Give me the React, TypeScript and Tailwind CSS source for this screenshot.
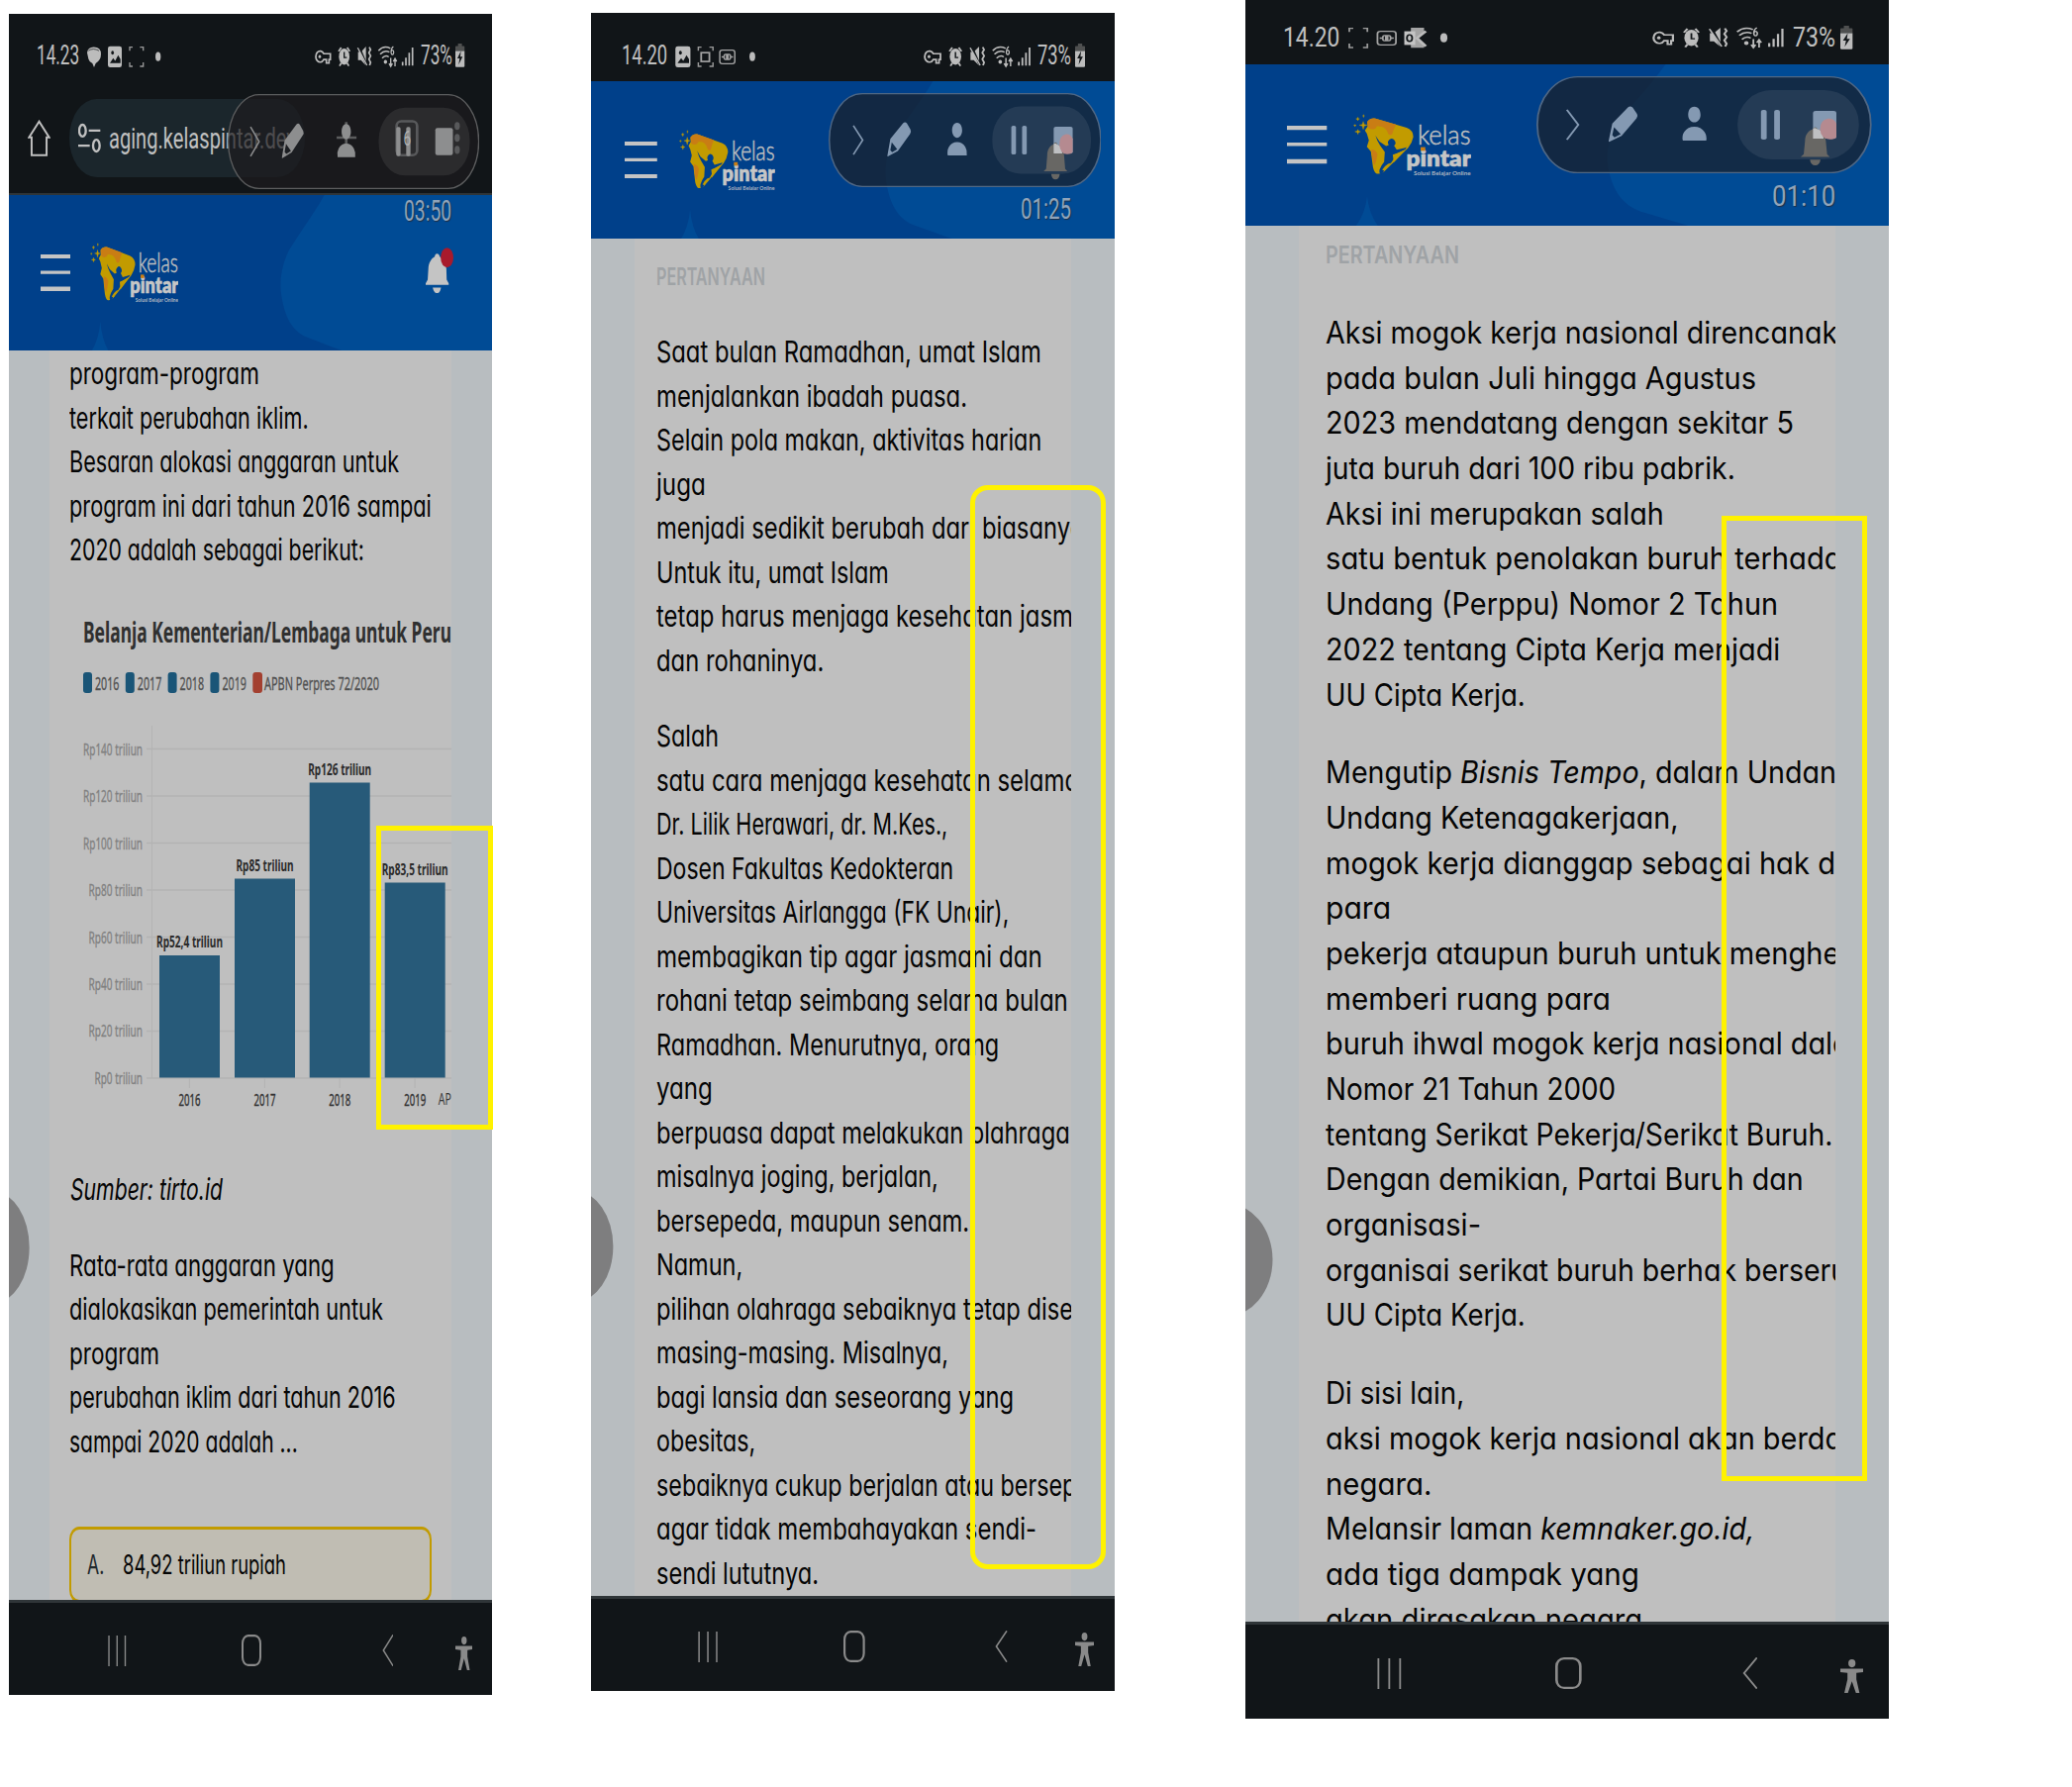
import React, { useLayoutEffect, useRef, useState } from "react";

/* Text squeezed or stretched horizontally to a given width. */
function Fit({ w, children, className = "" }: { w: number; children: React.ReactNode; className?: string }) {
  const ref = useRef<HTMLSpanElement>(null);
  const [scale, setScale] = useState(1);
  useLayoutEffect(() => {
    if (ref.current) setScale(w / ref.current.offsetWidth);
  }, [w]);
  return (
    <div className={"whitespace-nowrap " + className} style={{ width: w }}>
      <span ref={ref} className="inline-block origin-left" style={{ transform: `scaleX(${scale})` }}>
        {children}
      </span>
    </div>
  );
}

type LineData = [React.ReactNode, number];

function Para({ lines, line }: { lines: LineData[]; line: string }) {
  return (
    <div>
      {lines.map(([t, w], i) => (
        <Fit key={i} w={w + 2} className={line}>
          {t}
        </Fit>
      ))}
    </div>
  );
}

function StatusIcons() {
  return (
    <svg viewBox="954 130 300 76" preserveAspectRatio="none" className="h-[25px] w-[20.5%] shrink-0 text-[#bcbcbc]" fill="none" stroke="currentColor">
      <path d="M981 161a13 17 0 1 0 0 18h8v11h8v-11h4v-18z" strokeWidth="5" />
      <ellipse cx="969" cy="170" rx="4" ry="5" fill="currentColor" stroke="none" />
      <ellipse cx="1043" cy="170" rx="16" ry="25" fill="currentColor" stroke="none" />
      <path d="M1026 154l8-12M1060 154l-8-12M1029 199l5-9M1057 199l-5-9" strokeWidth="5" />
      <path d="M1043 156v17h8" stroke="#111518" strokeWidth="4" />
      <path d="M1085 156h9l15-17v59l-15-17h-9z" fill="currentColor" stroke="none" />
      <path d="M1088 139l24 60" stroke="#111518" strokeWidth="6" />
      <path d="M1084 143l28 54" strokeWidth="4" />
      <path d="M1119 141l4 8-5 9 5 10-5 10 5 10-3 9" strokeWidth="5" />
      <path d="M1147 152q16-18 36-7M1152 163q13-15 28-7M1158 175q10-12 20-4" strokeWidth="4.5" />
      <ellipse cx="1168" cy="186" rx="5" ry="6" fill="currentColor" stroke="none" />
      <path d="M1192 139q-7 5-7 17M1189 150a4 7 0 1 0 .1 0" strokeWidth="3.5" />
      <path d="M1184 174v26M1179 191l5 9 5-9M1197 200v-24M1192 185l5-9 5 9" strokeWidth="4" />
      <path d="M1220 186v12M1230 173v25M1240 158v40M1250 142v56" strokeWidth="5" />
    </svg>
  );
}

function Battery() {
  return (
    <svg viewBox="0 0 28 70" preserveAspectRatio="none" className="ml-[0.8%] mr-[5.6%] h-[24px] w-[1.9%] shrink-0">
      <path d="M8 0h12v7h6q2 0 2 3v12H0V10q0-3 2-3h6z" fill="#4f5050" />
      <path d="M0 22h28v44q0 3-3 3H3q-3 0-3-3z" fill="#bcbcbc" />
      <path d="M17 22L6 44h7l-3 18 12-23h-7z" fill="#111518" />
    </svg>
  );
}

const Picture = () => (
  <>
    <rect x="327" y="138" width="42" height="65" rx="7" fill="#bcbcbc" />
    <ellipse cx="341" cy="158" rx="4" ry="6" fill="#111518" />
    <path d="M333 190l10-15 6 8 9-17 7 12v12z" fill="#111518" />
  </>
);

const Corners = ({ x }: { x: number }) => (
  <path
    transform={`translate(${x} 0)`}
    d="M0 152v-11h9M31 141h10v11M41 188v12H31M9 200H0v-12"
    fill="none"
    stroke="#9a9a9a"
    strokeWidth="4"
  />
);

const Plug = ({ x }: { x: number }) => (
  <g transform={`translate(${x} 0)`} fill="none" stroke="#a4a4a4" strokeWidth="4">
    <rect x="2" y="150" width="42" height="42" rx="7" />
    <path d="M7 171h6M33 171h6M21 163h-3q-4 0-4 8t4 8h3zM25 163h3q4 0 4 8t-4 8h-3z" />
  </g>
);

function LeftIcons({ kind }: { kind: 1 | 2 | 3 }) {
  return (
    <svg viewBox="255 130 240 76" preserveAspectRatio="none" className="ml-[1%] h-[25px] w-[16.4%] shrink-0">
      {kind === 1 && (
        <>
          <path d="M264 158q2-16 20-17 22 0 22 22 0 18-16 28l-5 12-5-12q-9-3-12-14z" fill="#bcbcbc" />
          <path d="M268 152q14-10 32 0" stroke="#111518" strokeWidth="2" fill="none" />
          <Picture />
          <Corners x={393} />
        </>
      )}
      {kind === 2 && (
        <>
          <g transform="translate(-63 0)">
            <Picture />
          </g>
          <Corners x={328} />
          <rect x="336" y="158" width="23" height="27" fill="none" stroke="#a4a4a4" strokeWidth="5" />
          <Plug x={386} />
        </>
      )}
      {kind === 3 && (
        <>
          <Corners x={264} />
          <Plug x={326} />
          <path d="M404 139h30v12l-17 20 17 19v11h-30z" fill="#a4a4a4" />
          <rect x="389" y="150" width="25" height="42" fill="#c4c4c4" />
          <ellipse cx="401" cy="171" rx="6" ry="10" fill="none" stroke="#111518" strokeWidth="4" />
          <path d="M438 150l-20 21 20 25" stroke="#bcbcbc" strokeWidth="7" fill="none" />
        </>
      )}
      <ellipse cx="479" cy="170" rx="8" ry="14" fill="#bcbcbc" />
    </svg>
  );
}

function Status({ time, kind, tw, pw, cls }: { time: string; kind: 1 | 2 | 3; tw: number; pw: number; cls: string }) {
  return (
    <div className={"flex items-center bg-[#111518] font-['Roboto',sans-serif] text-[28px] leading-[30px] text-[#c0c0c0] " + cls}>
      <Fit w={tw} className="ml-[5.8%]">{time}</Fit>
      <LeftIcons kind={kind} />
      <div className="grow" />
      <StatusIcons />
      <Fit w={pw} className="ml-[1.3%]">73%</Fit>
      <Battery />
    </div>
  );
}

function Logo() {
  return (
    <svg viewBox="37 28 355 190" preserveAspectRatio="none" className="relative ml-[4.1%] h-[38.8%] w-[18.3%] shrink-0">
      <path d="M79 52Q88 40 104 42L198 70Q218 78 218 98 214 118 202 132L130 203Q120 212 106 209 97 202 95 180L90 142 78 128 84 108 78 88 72 78 80 66z" fill="#c29b00" />
      <path d="M79 52Q88 40 104 42L166 60 160 72 154 90Q143 96 140 82 132 66 116 66 108 62 104 72 92 78 82 70zM91 136Q104 136 110 150 108 168 102 184 97 180 95 168z" fill="#c97d14" />
      <path d="M104 94l12 18 20 14 8-3a11 12 0 1 1 16 2l8 12 26-6 4-2-4 7-26 12-12 4 2 14-8 12-18 20-10 14q-8-2-6-14 4-12 14-24l2-30-14-20q-9-13-14-30z" fill="#00408a" />
      <path d="M160 152l34-14-36 39z" fill="#c29b00" />
      <path d="M124 198q8-12 18-18l10-3-13 15-8 9z" fill="#c29b00" />
      <path d="M67 51l3 9 9 2-9 3-3 10-3-10-9-3 9-2zM51 75l2 5 6 2-6 2-2 6-2-6-7-2 7-2zM51 38l1 4 4 1-4 2-1 4-2-4-4-2 4-1zM42 60l1 2 3 1-3 1-1 3-1-3-3-1 3-1zM68 30l1 3 2 1-2 1-1 4-1-4-2-1 2-1z" fill="#c29b00" stroke="#c29b00" />
      <text x="231" y="122" textLength="160" lengthAdjust="spacingAndGlyphs" fontFamily="Lato" fontWeight="300" fontSize="83" fill="#c0c0c0" stroke="#c0c0c0" strokeWidth="1.5">kelas</text>
      <text x="197" y="188" textLength="195" lengthAdjust="spacingAndGlyphs" fontFamily="Lato" fontWeight="800" fontSize="70" fill="#c6c6c6" stroke="#c6c6c6" strokeWidth="1.5">pintar</text>
      <rect x="240" y="129" width="14" height="11" fill="#c97d14" />
      <text x="219" y="215" textLength="172" lengthAdjust="spacingAndGlyphs" fontFamily="Lato" fontWeight="700" fontSize="17" fill="#aeb6c0">Solusi Belajar Online</text>
    </svg>
  );
}

function Header({ cls, bell }: { cls: string; bell?: boolean }) {
  return (
    <div className={"relative flex items-center bg-[#00408a] " + cls}>
      <svg viewBox="27 591 1464 471" preserveAspectRatio="none" className="absolute inset-0 h-full w-full" fill="#004b95">
        <path d="M983 591C950 650 905 710 875 760 850 810 848 860 852 890 862 960 885 1000 925 1020L1035 1062H1491V591z" />
        <path d="M304 975q4 50 24 87h-49q21-37 25-87z" />
      </svg>
      <svg viewBox="0 0 90 110" preserveAspectRatio="none" className="relative ml-[6.5%] h-[23.5%] w-[6.2%] shrink-0" fill="#c4c4c4">
        <path d="M0 0h90v12H0zM0 49h90v10H0zM0 97h90v13H0z" />
      </svg>
      <Logo />
      <div className="grow" />
      {bell && (
        <svg viewBox="1290 746 84 140" preserveAspectRatio="none" className="relative -mt-[5px] mr-[8%] h-[29.6%] w-[5.8%]">
          <path d="M1324 765c-4 0-6 4-7 9-12 7-18 20-19 37l-2 33-6 11v5h69v-5l-6-11-1-33c-2-17-8-30-20-37-1-5-4-9-8-9zM1311 868h25q-3 17-12 17t-13-17z" fill="#c4c4c4" />
          <ellipse cx="1354" cy="777" rx="19" ry="30" fill="#a81a2c" />
        </svg>
      )}
    </div>
  );
}

/* Floating screen-recorder toolbar. */
function Recorder({ cls, browser, time, tw, timeCls }: { cls: string; browser?: boolean; time: string; tw: number; timeCls: string }) {
  const ink = browser ? "#8d8e8f" : "#8499b2";
  return (
    <div className={"absolute left-[45.3%] w-[52.1%] " + cls}>
      <svg viewBox="0 0 760 286" preserveAspectRatio="none" className="h-full w-full">
        <rect x="2" y="2" width="756" height="282" rx="92" ry="140" fill="#1c1b1e" fillOpacity={browser ? 0.7 : 0.66} stroke={browser ? "#5c5d5e" : "#4f6784"} strokeWidth="4" />
        <rect x="456" y="41" width="275" height="204" rx="78" ry="98" fill="#ffffff" fillOpacity="0.08" />
        {browser && (
          <g>
            <path d="M329 131h60M358 84v100" stroke="#5b5c5d" strokeWidth="8" />
            <rect x="510" y="82" width="62" height="102" rx="14" fill="none" stroke="#58595b" strokeWidth="8" />
            <g fill="#58595b">
              <ellipse cx="693" cy="96" rx="8" ry="12" />
              <ellipse cx="693" cy="132" rx="8" ry="12" />
              <ellipse cx="693" cy="168" rx="8" ry="12" />
            </g>
          </g>
        )}
        <path d="M69 99l26 44-26 44" fill="none" stroke={ink} strokeWidth="4.5" />
        <path d="M208 91q5-5 10 1l10 19q3 7-1 13l-34 52-28 17q-2 0-1-4l8-50zM176 150l-4 24 5 6 14-9z" fillRule="evenodd" fill={ink} />
        <path d="M358 90c10 0 14 12 14 24s-6 22-14 22-14-10-14-22 4-24 14-24zM332 190q-3-15 3-26 8-15 23-15t23 15q6 11 4 26z" fill={ink} />
        <rect x="509" y="99" width="13" height="88" rx="5" fill={ink} />
        <rect x="539" y="99" width="13" height="88" rx="5" fill={ink} />
        {browser && (
          <text x="531" y="156" fontFamily="Roboto" fontSize="58" fill="#b0b1b2" textLength="23" lengthAdjust="spacingAndGlyphs">6</text>
        )}
        <rect x="627" y="102" width="53" height="82" rx="6" fill={ink} />
        {!browser && (
          <g>
            <path d="M632 150c-3 0-4 3-5 6-13 5-18 20-18 34l-3 40-7 8h66l-6-8-3-40c-1-14-6-29-19-34-1-3-2-6-5-6zM620 246h24q-2 17-12 17t-12-17z" fill="#686764" />
            <path d="M627 155q4-5 8 0 9 3 14 12l2 17h-24z" fill="#bfc0c2" />
            <path d="M643 157q0-28 18-32 13-2 19 14v41q-4 6-15 6-20-1-22-29z" fill="#b58a90" />
          </g>
        )}
      </svg>
      <div className="absolute right-[11%] top-full font-['Roboto',sans-serif] text-[29px] leading-[34px] text-[#8fa3ba] [text-shadow:1px_1px_1px_#1c304a]">
        <Fit w={tw} className={timeCls}>{time}</Fit>
      </div>
    </div>
  );
}

function Nav({ cls }: { cls: string }) {
  return (
    <div className={"flex items-center border-t-[3px] border-[#2f3538] bg-[#111518] pt-[3px] " + cls}>
      <svg viewBox="0 0 54 82" preserveAspectRatio="none" className="ml-[20.5%] h-[31px] w-[3.8%]" stroke="#8a8a8a" strokeWidth="4">
        <path d="M3 0v82M27 0v82M51 0v82" />
      </svg>
      <svg viewBox="0 0 60 90" preserveAspectRatio="none" className="ml-[23.9%] h-[32px] w-[4.1%]" fill="none" stroke="#8a8a8a" strokeWidth="6">
        <rect x="3" y="3" width="54" height="84" rx="17" ry="22" />
      </svg>
      <svg viewBox="0 0 36 90" preserveAspectRatio="none" className="ml-[24.9%] h-[32px] w-[2.4%]" fill="none" stroke="#8a8a8a" strokeWidth="4.5">
        <path d="M34 1L4 45l30 44" />
      </svg>
      <svg viewBox="0 0 52 92" preserveAspectRatio="none" className="ml-[12.8%] mt-[6px] h-[34px] w-[3.6%]" fill="#8a8a8a">
        <ellipse cx="26" cy="11" rx="8" ry="11" />
        <path d="M0 26h52v9l-16 2v18l7 37h-8l-9-32-9 32H9l7-37V37L0 35z" />
      </svg>
    </div>
  );
}

function SideKnob({ cls }: { cls: string }) {
  return (
    <div className={"absolute left-0 w-[4.3%] overflow-hidden " + cls}>
      <svg viewBox="0 0 63 300" preserveAspectRatio="none" className="h-full w-full">
        <ellipse cx="-46" cy="150" rx="108" ry="150" fill="#7e7e7f" />
      </svg>
    </div>
  );
}

const bars = [
  { x: 161, top: 965, label: "Rp52,4 triliun", lw: 67, year: "2016" },
  { x: 237, top: 887.5, label: "Rp85 triliun", lw: 58, year: "2017" },
  { x: 312.7, top: 790.5, label: "Rp126 triliun", lw: 64, year: "2018" },
  { x: 388.7, top: 891.5, label: "Rp83,5 triliun", lw: 67, year: "2019" },
];

function Chart() {
  return (
    <svg viewBox="69 578 387 601" className="block h-[601px] w-[387px]" fontFamily="'Noto Sans', sans-serif">
      <text x="84" y="649" fontWeight="700" fontSize="28.5" fill="#303030" textLength="372" lengthAdjust="spacingAndGlyphs">Belanja Kementerian/Lembaga untuk Peru</text>
      {["2016", "2017", "2018", "2019"].map((t, i) => (
        <g key={t}>
          <rect x={84 + i * 42.8} y="679" width="9" height="21" rx="3" fill="#1a5577" />
          <text x={96 + i * 42.8} y="697" fontSize="18.5" fill="#505050" stroke="#505050" strokeWidth="0.3" textLength="24.5" lengthAdjust="spacingAndGlyphs">{t}</text>
        </g>
      ))}
      <rect x="255.3" y="679" width="9.7" height="21" rx="3" fill="#a34030" />
      <text x="267" y="697" fontSize="18.5" fill="#505050" stroke="#505050" strokeWidth="0.3" textLength="116" lengthAdjust="spacingAndGlyphs">APBN Perpres 72/2020</text>
      <path d="M153.5 733v356" stroke="#b3b3b3" />
      {[140, 120, 100, 80, 60, 40, 20, 0].map((v, i) => {
        const w = v >= 100 ? 60 : v > 0 ? 54.5 : 48.5;
        return (
          <g key={v}>
            <path d={`M148 ${756.5 + i * 47.5}H456`} stroke="#b3b3b3" strokeWidth="1.3" />
            <text x={144 - w} y={763 + i * 47.4} fontSize="16.5" fill="#808080" stroke="#808080" strokeWidth="0.3" textLength={w} lengthAdjust="spacingAndGlyphs">{`Rp${v} triliun`}</text>
          </g>
        );
      })}
      {bars.map((b) => (
        <g key={b.year}>
          <path d={`M${b.x + 30.4} 1089v10`} stroke="#b3b3b3" />
          <rect x={b.x} y={b.top} width="61" height={1088.5 - b.top} fill="#275a79" />
          <text x={b.x + 30.5 - b.lw / 2} y={b.top - 8} fontWeight="700" fontSize="16.5" fill="#2b2b2b" stroke="#bfbfbf" strokeWidth="2" paintOrder="stroke" textLength={b.lw} lengthAdjust="spacingAndGlyphs">{b.label}</text>
          <text x={b.x + 19.5} y="1117" fontSize="17" fill="#333" stroke="#333" strokeWidth="0.4" textLength="22" lengthAdjust="spacingAndGlyphs">{b.year}</text>
        </g>
      ))}
      <text x="442.7" y="1116" fontSize="17" fill="#3a3a3a" textLength="20" lengthAdjust="spacingAndGlyphs">APB</text>
    </svg>
  );
}

const body = "font-['Inter',sans-serif] text-[#050505] [font-feature-settings:'cv11'] ";
const L1 = "h-[44.5px] leading-[44.5px]";
const L3 = "h-[45.7px] leading-[45.7px]";

const p1a: LineData[] = [
  ["program-program", 190],
  ["terkait perubahan iklim.", 240],
  ["Besaran alokasi anggaran untuk", 331],
  ["program ini dari tahun 2016 sampai", 364],
  ["2020 adalah sebagai berikut:", 296],
];
const p1b: LineData[] = [
  ["Rata-rata anggaran yang", 266],
  ["dialokasikan pemerintah untuk", 315],
  ["program", 89],
  ["perubahan iklim dari tahun 2016", 328],
  ["sampai 2020 adalah ...", 229],
];
const p2a: LineData[] = [
  ["Saat bulan Ramadhan, umat Islam", 387],
  ["menjalankan ibadah puasa.", 312],
  ["Selain pola makan, aktivitas harian", 387],
  ["juga", 48],
  ["menjadi sedikit berubah dari biasanya", 430],
  ["Untuk itu, umat Islam", 233],
  ["tetap harus menjaga kesehatan jasm", 419],
  ["dan rohaninya.", 167],
];
const p2b: LineData[] = [
  ["Salah", 61],
  ["satu cara menjaga kesehatan selama", 425],
  ["Dr. Lilik Herawari, dr. M.Kes.,", 292],
  ["Dosen Fakultas Kedokteran", 298],
  ["Universitas Airlangga (FK Unair),", 354],
  ["membagikan tip agar jasmani dan", 388],
  ["rohani tetap seimbang selama bulan", 414],
  ["Ramadhan. Menurutnya, orang", 344],
  ["yang", 55],
  ["berpuasa dapat melakukan olahraga", 416],
  ["misalnya joging, berjalan,", 283],
  ["bersepeda, maupun senam.", 314],
  ["Namun,", 85],
  ["pilihan olahraga sebaiknya tetap dise", 419],
  ["masing-masing. Misalnya,", 293],
  ["bagi lansia dan seseorang yang", 359],
  ["obesitas,", 98],
  ["sebaiknya cukup berjalan atau bersep", 422],
  ["agar tidak membahayakan sendi-", 382],
  ["sendi lututnya.", 162],
];
const p3a: LineData[] = [
  ["Aksi mogok kerja nasional direncanak", 515],
  ["pada bulan Juli hingga Agustus", 433],
  ["2023 mendatang dengan sekitar 5", 471],
  ["juta buruh dari 100 ribu pabrik.", 412],
  ["Aksi ini merupakan salah", 340],
  ["satu bentuk penolakan buruh terhada", 520],
  ["Undang (Perppu) Nomor 2 Tahun", 455],
  ["2022 tentang Cipta Kerja menjadi", 457],
  ["UU Cipta Kerja.", 200],
];
const p3b: LineData[] = [
  [<>Mengutip <i>Bisnis Tempo</i>, dalam Undan</>, 514],
  ["Undang Ketenagakerjaan,", 355],
  ["mogok kerja dianggap sebagai hak d", 513],
  ["para", 64],
  ["pekerja ataupun buruh untuk menghe", 517],
  ["memberi ruang para", 286],
  ["buruh ihwal mogok kerja nasional dala", 528],
  ["Nomor 21 Tahun 2000", 291],
  ["tentang Serikat Pekerja/Serikat Buruh.", 510],
  ["Dengan demikian, Partai Buruh dan", 481],
  ["organisasi-", 155],
  ["organisai serikat buruh berhak berseru", 525],
  ["UU Cipta Kerja.", 200],
];
const p3c: LineData[] = [
  ["Di sisi lain,", 138],
  ["aksi mogok kerja nasional akan berda", 520],
  ["negara.", 105],
  [<>Melansir laman <i>kemnaker.go.id,</i></>, 431],
  ["ada tiga dampak yang", 315],
  ["akan dirasakan negara", 318],
];

export default function App() {
  return (
    <div className="flex h-[1805px] w-[2093px] items-start overflow-hidden bg-white">
      {/* Chart question, opened in the browser */}
      <section className="relative ml-[9px] mt-[14px] flex h-[1698px] w-[488px] flex-col">
        <Status time="14.23" kind={1} tw={43} pw={32} cls="h-[84px]" />
        <div className="flex h-[99px] items-center border-b-2 border-[#2f3538] bg-[#111518] pb-[14px] pl-[19px]">
          <svg viewBox="84 363 70 110" className="h-[37px] w-[23px]" preserveAspectRatio="none" fill="none" stroke="#c0c0c0" strokeWidth="6">
            <path d="M119 368L88 416h8v53h46v-53h8z" />
          </svg>
          <div className="ml-[19px] flex h-[79px] w-[238px] items-center rounded-[28px/40px] bg-[#1b262c] pl-[9px]">
            <svg viewBox="237 371 69 94" className="h-[31px] w-[23px]" preserveAspectRatio="none" fill="none" stroke="#c0c0c0" strokeWidth="7">
              <ellipse cx="250" cy="395" rx="10" ry="18" />
              <path d="M269 395h35M237 441h35" />
              <ellipse cx="292" cy="441" rx="10" ry="18" />
            </svg>
            <Fit w={189} className="ml-[8px] font-['Roboto',sans-serif] text-[30px] leading-[40px] text-[#c0c0c0]">aging.kelaspintar.dev</Fit>
          </div>
        </div>
        <Header cls="h-[157px]" bell />
        <div className="flex h-[1262px] bg-[#b8bdc0] pl-[41px]">
          <div className={"w-[406px] overflow-hidden bg-[#bfbfbf] pl-[20px] pt-px text-[30px] " + body}>
            <Para lines={p1a} line={L1} />
            <div className="-ml-px mt-[0.5px]">
              <Chart />
            </div>
            <Fit w={154} className={"ml-px italic " + L1}>Sumber: tirto.id</Fit>
            <div className="h-[32px]" />
            <Para lines={p1b} line={L1} />
            <div className="mt-[64px] flex h-[77px] w-[366px] items-center rounded-[10px/13px] border-x-2 border-y-[3.5px] border-[#c29b00] bg-[#c0bdb3] pl-[16px] pt-[2px] text-[27px]">
              <Fit w={17} className="text-[#20282c]">A.</Fit>
              <Fit w={165} className="ml-[19px]">84,92 triliun rupiah</Fit>
            </div>
          </div>
        </div>
        <Nav cls="h-[96px]" />
        <SideKnob cls="top-[1190px] h-[112px]" />
        <Recorder cls="top-[81px] h-[96px]" browser time="03:50" tw={48} timeCls="mt-[5px]" />
        <div className="absolute left-[371px] top-[820px] h-[307px] w-[118px] border-[5px] border-[#fff200]" />
      </section>

      {/* Ramadhan passage */}
      <section className="relative ml-[100px] mt-[13px] flex h-[1695px] w-[529px] flex-col">
        <Status time="14.20" kind={2} tw={46} pw={34} cls="h-[69px] pt-[17px]" />
        <Header cls="h-[159px]" />
        <div className="flex h-[1371px] bg-[#b8bdc0] pl-[44px]">
          <div className={"w-[441px] overflow-hidden bg-[#bfbfbf] pl-[22px] pt-[21px] text-[30px] " + body}>
            <Fit w={110} className="h-[36px] text-[24px] font-semibold leading-[36px] text-[#9fa3a6]">PERTANYAAN</Fit>
            <div className="h-[35px]" />
            <Para lines={p2a} line={L1} />
            <div className="h-[32px]" />
            <Para lines={p2b} line={L1} />
          </div>
        </div>
        <Nav cls="h-[96px]" />
        <SideKnob cls="top-[1190px] h-[112px]" />
        <Recorder cls="top-[81px] h-[95px]" time="01:25" tw={51} timeCls="mt-[5px]" />
        <div className="absolute left-[383px] top-[477px] h-[1095px] w-[137px] rounded-[18px] border-[5px] border-[#fff200]" />
      </section>

      {/* National strike passage */}
      <section className="relative ml-[132px] flex h-[1736px] w-[650px] flex-col">
        <Status time="14.20" kind={3} tw={57} pw={43} cls="h-[65px] pt-[10px]" />
        <Header cls="h-[163px]" />
        <div className="flex h-[1410px] bg-[#b8bdc0] pl-[54px]">
          <div className={"w-[542px] overflow-hidden bg-[#bfbfbf] pl-[27px] pt-[12px] text-[31px] " + body}>
            <Fit w={135} className="h-[36px] text-[24px] font-semibold leading-[36px] text-[#9fa3a6]">PERTANYAAN</Fit>
            <div className="h-[37px]" />
            <Para lines={p3a} line={L3} />
            <div className="h-[33px]" />
            <Para lines={p3b} line={L3} />
            <div className="h-[33px]" />
            <Para lines={p3c} line={L3} />
          </div>
        </div>
        <Nav cls="h-[98px]" />
        <SideKnob cls="top-[1215px] h-[115px]" />
        <Recorder cls="top-[77px] h-[98px]" time="01:10" tw={64} timeCls="mt-[6px]" />
        <div className="absolute left-[481px] top-[521px] h-[975px] w-[147px] border-[5px] border-[#fff200]" />
      </section>
    </div>
  );
}
